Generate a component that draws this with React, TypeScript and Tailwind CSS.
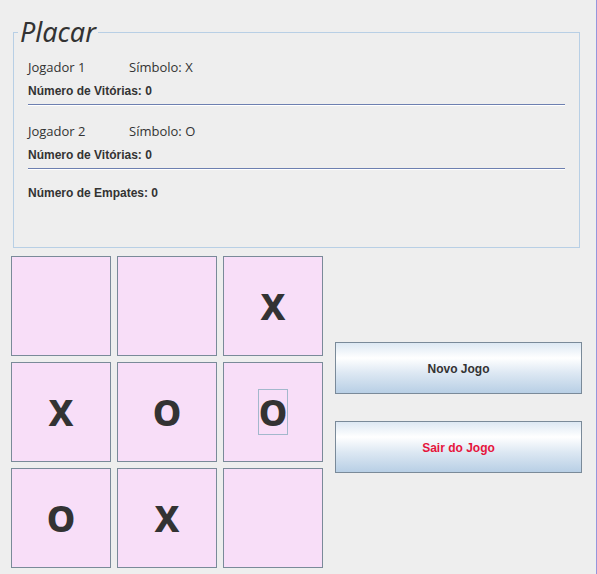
import { clsx } from 'clsx';

type Mark = 'X' | 'O' | '';

const board: Mark[] = ['', '', 'X', 'X', 'O', 'O', 'O', 'X', ''];
const focusedCell = 5;

const players = [
  { name: 'Jogador 1', symbol: 'X', wins: 0 },
  { name: 'Jogador 2', symbol: 'O', wins: 0 },
];

function PlayerScore({ name, symbol, wins }: { name: string; symbol: string; wins: number }) {
  return (
    <div className="mb-3.5 border-b border-[#6d7fb0] shadow-[0_1px_0_#ffffff]">
      <div className="flex font-['Open_Sans','Noto_Sans',sans-serif] text-[13px] leading-6">
        <span className="w-[101px]">{name}</span>
        <span>Símbolo: {symbol}</span>
      </div>
      <p className="h-[25px] text-xs leading-6 font-bold">Número de Vitórias: {wins}</p>
    </div>
  );
}

function Cell({ mark, focused, index }: { mark: Mark; focused: boolean; index: number }) {
  return (
    <button
      type="button"
      aria-label={`Casa ${index + 1} ${mark}`}
      className="flex aspect-square items-center justify-center border border-[#7a8a99] bg-[#f8def8]"
    >
      {mark && (
        <span
          className={clsx(
            "border pt-0.5 font-['Noto_Sans','Open_Sans',sans-serif] text-4xl leading-[42px] font-extrabold",
            focused ? 'border-[#a3b8cc]' : 'border-transparent',
          )}
        >
          {mark}
        </span>
      )}
    </button>
  );
}

function ActionButton({ label, danger = false }: { label: string; danger?: boolean }) {
  return (
    <button
      type="button"
      className={clsx(
        'h-[52px] w-full border border-[#7a8a99] bg-linear-[to_bottom,#dde8f3_0%,#ffffff_30%,#dde8f3_60%,#b8cfe5_100%] pt-0.5 text-xs font-bold',
        danger ? 'text-[#e6143c]' : 'text-[#333333]',
      )}
    >
      {label}
    </button>
  );
}

export default function App() {
  return (
    <main className="min-h-screen border-r border-[#9696dc] bg-[#eeeeee] pt-3.5 pr-3.5 pb-1.5 pl-[11px] font-['Liberation_Sans',Arial,sans-serif] text-[#333333]">
      <fieldset className="mx-0.5 min-h-[234px] border border-[#b8cfe5] px-3.5">
        <legend className="-ml-2.5 px-0.5 font-['Noto_Sans','Open_Sans',sans-serif] text-[27px] leading-9 italic">
          Placar
        </legend>
        <div className="pt-[5px]">
          {players.map((player) => (
            <PlayerScore key={player.name} {...player} />
          ))}
          <p className="text-xs leading-5 font-bold">Número de Empates: 0</p>
        </div>
      </fieldset>

      <div className="mt-2 flex gap-3">
        <div className="grid w-[312px] shrink-0 grid-cols-3 gap-1.5">
          {board.map((mark, index) => (
            <Cell key={index} index={index} mark={mark} focused={index === focusedCell} />
          ))}
        </div>
        <div className="flex grow flex-col gap-[27px] pt-[86px]">
          <ActionButton label="Novo Jogo" />
          <ActionButton label="Sair do Jogo" danger />
        </div>
      </div>
    </main>
  );
}
